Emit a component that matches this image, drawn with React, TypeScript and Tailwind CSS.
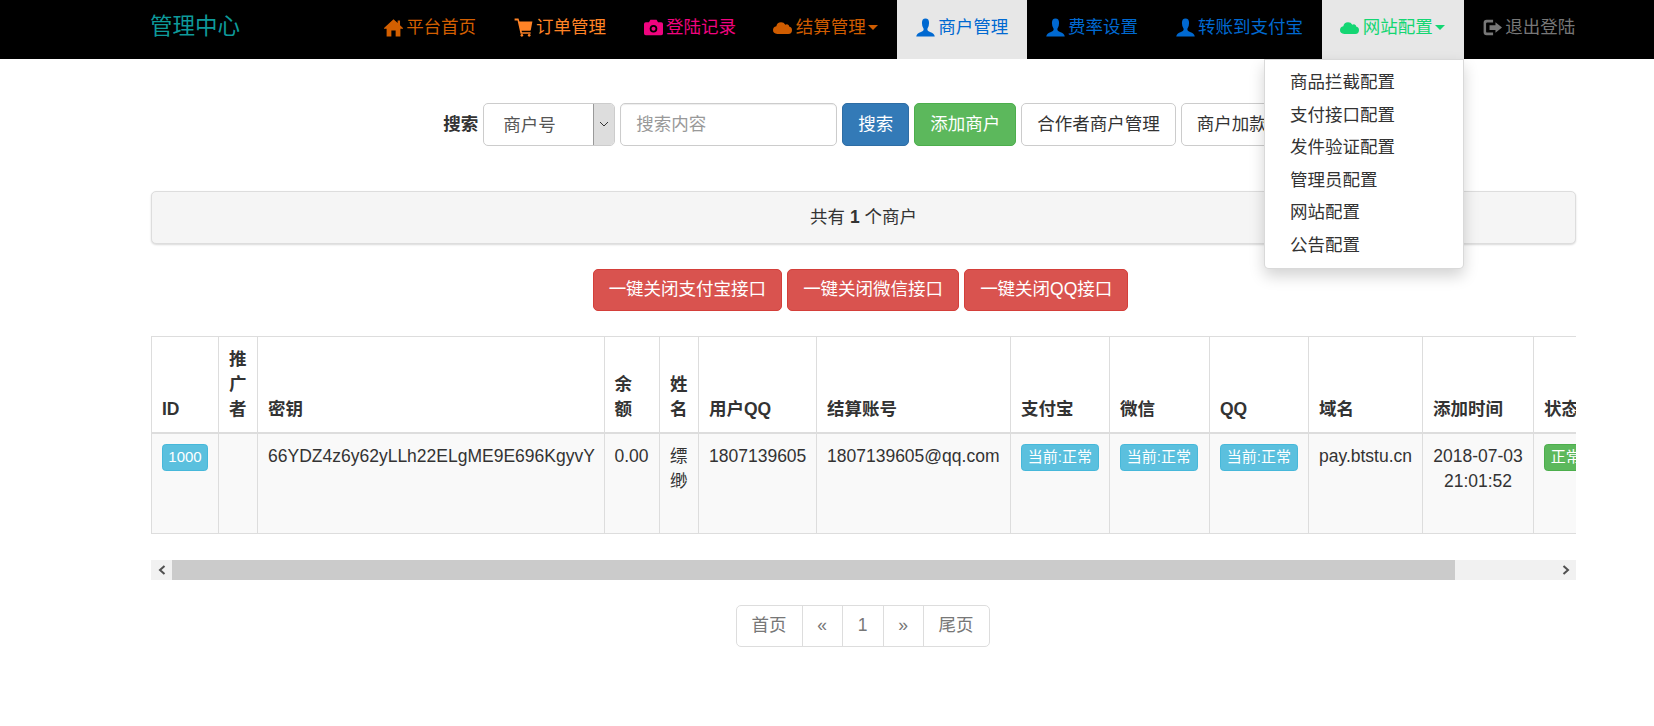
const FONT = "font-['Liberation_Sans','Noto_Sans_CJK_SC',sans-serif]";

type IconProps = { className?: string };

const HomeIcon = ({ className }: IconProps) => (
  <svg viewBox="0 0 16 16" fill="currentColor" className={className}>
    <path d="M8 1 L11.5 4.2 V2 H13.5 V6 L16 8.4 V9 H13.8 V15.5 H9.8 V10.5 H6.2 V15.5 H2.2 V9 H0 V8.4 Z" />
  </svg>
);

const CartIcon = ({ className }: IconProps) => (
  <svg viewBox="0 0 16 16" fill="currentColor" className={className}>
    <path d="M0.5 0.5 H3.8 L4.6 3 H15.5 L14.2 9.8 Q14 10.8 13 10.8 H6.4 L6.7 12 H14 V13.2 H5.5 L3 2 H0.5 Z" />
    <circle cx="6.6" cy="14.6" r="1.1" />
    <circle cx="12.8" cy="14.6" r="1.1" />
  </svg>
);

const CameraIcon = ({ className }: IconProps) => (
  <svg viewBox="0 0 16 16" className={className}>
    <path
      fill="currentColor"
      d="M5.4 1.5 H10.6 L11.8 3.5 H14.5 Q16 3.5 16 5 V13 Q16 14.5 14.5 14.5 H1.5 Q0 14.5 0 13 V5 Q0 3.5 1.5 3.5 H4.2 Z"
    />
    <circle cx="8" cy="9" r="3.2" fill="#000" />
    <circle cx="8" cy="9" r="1.7" fill="currentColor" />
  </svg>
);

const CloudIcon = ({ className }: IconProps) => (
  <svg viewBox="0 0 16 16" fill="currentColor" className={className}>
    <path d="M3.6 13.5 Q0 13.3 0 10.2 Q0 7.6 2.8 7 Q3.4 3.5 6.8 3.5 Q9.2 3.5 10.4 5.6 Q11.4 5 12.4 5.4 Q13.6 5.9 13.6 7.2 Q16 7.8 16 10.3 Q16 13.3 12.8 13.5 Z" />
  </svg>
);

const UserIcon = ({ className }: IconProps) => (
  <svg viewBox="0 0 16 16" fill="currentColor" className={className}>
    <path d="M8 0.5 Q11 0.5 11 4.2 Q11 7.2 9.6 9 V10.2 Q9.8 11 11.8 11.7 Q15.4 12.8 15.8 15.5 H0.2 Q0.6 12.8 4.2 11.7 Q6.2 11 6.4 10.2 V9 Q5 7.2 5 4.2 Q5 0.5 8 0.5 Z" />
  </svg>
);

const LogoutIcon = ({ className }: IconProps) => (
  <svg viewBox="0 0 16 16" fill="currentColor" className={className}>
    <path d="M3 1.5 H8.5 V3.7 H3.6 Q2.6 3.7 2.6 4.7 V11.3 Q2.6 12.3 3.6 12.3 H8.5 V14.5 H3 Q0.5 14.5 0.5 12 V4 Q0.5 1.5 3 1.5 Z" />
    <path d="M10.5 3.5 L16 8 L10.5 12.5 V10 H5.5 V6 H10.5 Z" />
  </svg>
);

const Caret = () => (
  <span className="inline-block w-0 h-0 ml-[2.5px] align-middle border-x-[5px] border-x-transparent border-t-[5px] border-t-current" />
);

const NAV_ITEMS = [
  { label: "平台首页", Icon: HomeIcon, color: "text-[#d35f00]" },
  { label: "订单管理", Icon: CartIcon, color: "text-[#ff8326]" },
  { label: "登陆记录", Icon: CameraIcon, color: "text-[#f0047f]" },
  { label: "结算管理", Icon: CloudIcon, color: "text-[#cf5c00]", caret: true },
  { label: "商户管理", Icon: UserIcon, color: "text-[#0069d1]", active: true },
  { label: "费率设置", Icon: UserIcon, color: "text-[#0069d1]" },
  { label: "转账到支付宝", Icon: UserIcon, color: "text-[#0069d1]" },
  { label: "网站配置", Icon: CloudIcon, color: "text-[#14d673]", caret: true, active: true, open: true },
  { label: "退出登陆", Icon: LogoutIcon, color: "text-[#777777]" },
];

const MENU_ITEMS = ["商品拦截配置", "支付接口配置", "发件验证配置", "管理员配置", "网站配置", "公告配置"];

const COLUMNS = [
  { title: "ID", width: "w-[67px]" },
  { title: "推广者", width: "w-[39px]" },
  { title: "密钥", width: "w-[346.5px]" },
  { title: "余额", width: "w-[55.5px]" },
  { title: "姓名", width: "w-[39px]" },
  { title: "用户QQ", width: "w-[118px]" },
  { title: "结算账号", width: "w-[194px]" },
  { title: "支付宝", width: "w-[99px]" },
  { title: "微信", width: "w-[100px]" },
  { title: "QQ", width: "w-[99px]" },
  { title: "域名", width: "w-[114px]" },
  { title: "添加时间", width: "w-[111px]" },
  { title: "状态", width: "w-[154px]" },
];

const btn = "h-[42.5px] px-[15px] border rounded-[5px] whitespace-nowrap";
const xsBtn = "inline-block h-[27px] px-[5.75px] border rounded-[3.75px] text-[15px] leading-[24px] text-white whitespace-nowrap";
const infoBtn = `${xsBtn} bg-[#5bc0de] border-[#46b8da]`;
const td = "p-[10px] align-top border border-[#dddddd]";

function NavBar() {
  return (
    <nav className="flex items-start justify-between h-[59px] pl-[150px] pr-[60px] bg-black">
      <span className="pt-[14px] text-[22.5px] leading-[25px] text-[#0e9a9a]">管理中心</span>
      <ul className="flex">
        {NAV_ITEMS.map(({ label, Icon, color, caret, active, open }) => (
          <li key={label} className={`relative h-[59px] ${active ? "bg-[#e7e7e7]" : ""}`}>
            <a className={`flex items-center h-[54px] px-[18.75px] ${color}`}>
              <Icon className="w-[19px] h-[19px] mr-[3.4px]" />
              {label}
              {caret && <Caret />}
            </a>
            {open && (
              <ul className="absolute right-0 top-full z-10 w-[200px] py-[6.25px] bg-white border border-black/15 rounded-b-[5px] shadow-[0_7px_15px_rgba(0,0,0,0.175)]">
                {MENU_ITEMS.map((m) => (
                  <li key={m} className="px-[25px] py-[3.75px] text-[#333333]">
                    {m}
                  </li>
                ))}
              </ul>
            )}
          </li>
        ))}
      </ul>
    </nav>
  );
}

function SearchForm() {
  return (
    <form className="flex items-center justify-center gap-[5px] pr-[1px]">
      <label className="font-bold">搜索</label>
      <div className="flex w-[132px] h-[42.5px] border border-[#cccccc] rounded-[5px] overflow-hidden text-[#555555]">
        <span className="flex-1 pl-[19px] pt-[9px]">商户号</span>
        <span className="flex items-center justify-center w-[21px] bg-[#dddddd] border-l border-[#999999]">
          <svg viewBox="0 0 10 6" className="w-[10px] h-[6px]" fill="none" stroke="#333333">
            <path d="M1 1 L5 5 L9 1" />
          </svg>
        </span>
      </div>
      <input
        placeholder="搜索内容"
        className="w-[217px] h-[42.5px] px-[15px] border border-[#cccccc] rounded-[5px] text-[#555555] placeholder:text-[#999999] shadow-[inset_0_1px_1px_rgba(0,0,0,0.075)]"
      />
      <button type="button" className={`${btn} bg-[#337ab7] border-[#2e6da4] text-white`}>搜索</button>
      <button type="button" className={`${btn} bg-[#5cb85c] border-[#4cae4c] text-white`}>添加商户</button>
      <button type="button" className={`${btn} bg-white border-[#cccccc]`}>合作者商户管理</button>
      <button type="button" className={`${btn} bg-white border-[#cccccc]`}>商户加款</button>
    </form>
  );
}

function MerchantTable() {
  return (
    <div className="overflow-hidden">
      <table className="table-fixed w-[1536px] border-collapse">
        <colgroup>
          {COLUMNS.map((c) => (
            <col key={c.title} className={c.width} />
          ))}
        </colgroup>
        <thead>
          <tr>
            {COLUMNS.map((c) => (
              <th key={c.title} className="p-[10px] align-bottom text-left font-bold border border-b-2 border-[#dddddd]">
                {c.title}
              </th>
            ))}
          </tr>
        </thead>
        <tbody>
          <tr className="h-[100px] bg-[#f9f9f9]">
            <td className={td}>
              <span className={`${infoBtn} w-[46px] !px-0 text-center`}>1000</span>
            </td>
            <td className={td}></td>
            <td className={`${td} whitespace-nowrap`}>66YDZ4z6y62yLLh22ELgME9E696KgyvY</td>
            <td className={td}>0.00</td>
            <td className={td}>缥缈</td>
            <td className={td}>1807139605</td>
            <td className={td}>1807139605@qq.com</td>
            <td className={td}><span className={infoBtn}>当前:正常</span></td>
            <td className={td}><span className={infoBtn}>当前:正常</span></td>
            <td className={td}><span className={infoBtn}>当前:正常</span></td>
            <td className={td}>pay.btstu.cn</td>
            <td className={`${td} text-center`}>2018-07-03 21:01:52</td>
            <td className={td}>
              <span className={`${xsBtn} bg-[#5cb85c] border-[#4cae4c]`}>正常</span>
            </td>
          </tr>
        </tbody>
      </table>
    </div>
  );
}

function ScrollBar() {
  return (
    <div className="flex items-center h-[20px] mt-[26px] bg-[#f1f1f1]">
      <span className="flex items-center justify-center w-[21px] h-full">
        <svg viewBox="0 0 8 10" className="w-[8px] h-[10px]" fill="none" stroke="#505050" strokeWidth="2">
          <path d="M6.5 1 L2 5 L6.5 9" />
        </svg>
      </span>
      <span className="w-[1283px] h-full bg-[#cbcbcb]" />
      <span className="flex-1" />
      <span className="flex items-center justify-center w-[21px] h-full">
        <svg viewBox="0 0 8 10" className="w-[8px] h-[10px]" fill="none" stroke="#505050" strokeWidth="2">
          <path d="M1.5 1 L6 5 L1.5 9" />
        </svg>
      </span>
    </div>
  );
}

function Pagination() {
  const pages = [
    { label: "首页", width: "w-[66px]" },
    { label: "«", width: "w-[40px]" },
    { label: "1", width: "w-[41px]" },
    { label: "»", width: "w-[40px]" },
    { label: "尾页", width: "w-[65px]" },
  ];
  return (
    <div className="flex justify-center mt-[25px] pr-[2px]">
      <ul className="flex h-[42.5px] border border-[#dddddd] rounded-[5px] divide-x divide-[#dddddd] text-[#777777]">
        {pages.map((p) => (
          <li key={p.label} className={`flex items-center justify-center ${p.width}`}>
            {p.label}
          </li>
        ))}
      </ul>
    </div>
  );
}

export default function App() {
  return (
    <div className={`${FONT} min-h-[726px] bg-white text-[17.5px] leading-[25px] text-[#333333]`}>
      <NavBar />
      <main className="w-[1425px] ml-[151px] pt-[44px]">
        <SearchForm />

        <div className="flex items-center justify-center h-[53px] mt-[45px] bg-[#f5f5f5] border border-[#dddddd] rounded-[5px] shadow-[0_1px_2px_rgba(0,0,0,0.15)]">
          <span>
            共有 <b>1</b> 个商户
          </span>
        </div>

        <div className="flex justify-center gap-[5px] my-[25px] pr-[6px]">
          {["一键关闭支付宝接口", "一键关闭微信接口", "一键关闭QQ接口"].map((t) => (
            <button key={t} type="button" className={`${btn} bg-[#d9534f] border-[#d43f3a] text-white`}>
              {t}
            </button>
          ))}
        </div>

        <MerchantTable />
        <ScrollBar />
        <Pagination />
      </main>
    </div>
  );
}
